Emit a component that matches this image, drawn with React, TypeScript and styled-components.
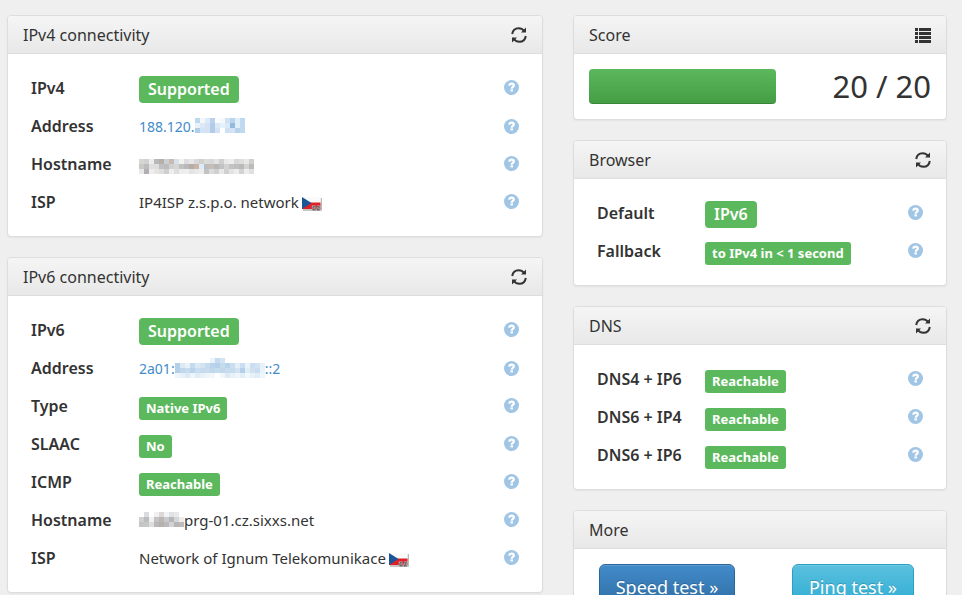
import React from "react";
import styled, { createGlobalStyle } from "styled-components";

const GlobalStyle = createGlobalStyle`
  * { box-sizing: border-box; }
  body {
    margin: 0;
    background: #efefef;
    color: #333;
    font-family: "Noto Sans", "Open Sans", sans-serif;
    font-size: 15px;
    line-height: 20px;
  }
`;

const Page = styled.main`
  display: grid;
  grid-template-columns: 536fr 374fr;
  gap: 30px;
  align-items: start;
  padding: 15px 15px 20px 7px;
`;

const Column = styled.div`
  display: flex;
  flex-direction: column;
  gap: 20px;
  min-width: 0;
`;

const PanelBox = styled.section`
  background: #fff;
  border: 1px solid #ddd;
  border-radius: 4px;
  box-shadow: 0 1px 2px rgba(0, 0, 0, 0.05);
`;

const PanelHeader = styled.header`
  display: flex;
  align-items: center;
  justify-content: space-between;
  min-height: 38px;
  padding: 0 15px;
  border-bottom: 1px solid #ddd;
  border-radius: 3px 3px 0 0;
  background: linear-gradient(#f5f5f5, #e8e8e8);
`;

const PanelTitle = styled.h2`
  margin: 0;
  font-size: 16px;
  font-weight: 400;
  line-height: 22px;
`;

const IconButton = styled.button`
  display: flex;
  padding: 0;
  border: 0;
  background: none;
  color: #333;
  cursor: pointer;
`;

const Facts = styled.dl`
  margin: 0;
  padding: 15px 23px;
`;

const Fact = styled.div`
  display: grid;
  grid-template-columns: 108px 1fr auto;
  height: 38px;
  line-height: 38px;
`;

const Label = styled.dt`
  font-size: 16px;
  font-weight: 600;
  white-space: nowrap;
`;

const Value = styled.dd`
  margin: 0;
  white-space: nowrap;
`;

const Help = styled.dd`
  display: flex;
  align-items: center;
  margin: 0;
  padding-bottom: 1px;
`;

const HelpButton = styled(IconButton)`
  color: #a0c5e5;
`;

const Badge = styled.span<{ $large?: boolean }>`
  display: inline-block;
  padding: ${(p) => (p.$large ? "3px 9px 4px" : "2px 7px 3px")};
  border-radius: ${(p) => (p.$large ? "4px" : "3px")};
  background: #5cb85c;
  color: #fff;
  font-size: ${(p) => (p.$large ? "16px" : "13px")};
  font-weight: ${(p) => (p.$large ? 600 : 700)};
  line-height: ${(p) => (p.$large ? "20px" : "18px")};
  vertical-align: -1px;
`;

const AddressLink = styled.a`
  color: #428bca;
  font-size: 14px;
  text-decoration: none;
`;

const MosaicSvg = styled.svg<{ $drop: number }>`
  vertical-align: ${(p) => -p.$drop}px;
`;

const FlagSvg = styled.svg`
  margin-left: 3px;
  vertical-align: -4px;
`;

const ScoreBody = styled.div`
  display: flex;
  align-items: center;
  justify-content: space-between;
  padding: 15px;
`;

const ScoreTrack = styled.div`
  width: 187px;
  flex: 0 1 auto;
`;

const ScoreFill = styled.div`
  height: 35px;
  border-radius: 4px;
  background: linear-gradient(#5cb85c, #449d44);
  box-shadow: inset 0 -1px 0 rgba(0, 0, 0, 0.15);
`;

const ScoreText = styled.strong`
  font-size: 31px;
  font-weight: 400;
  line-height: 35px;
`;

const Actions = styled.div`
  display: grid;
  grid-template-columns: 1fr 1fr;
  justify-items: center;
  padding: 15px 0;
`;

const ActionLink = styled.a<{ $tone: "primary" | "info" }>`
  padding: 10px 16px;
  border: 1px solid ${(p) => (p.$tone === "primary" ? "#2b669a" : "#28a1c5")};
  border-radius: 6px;
  background: ${(p) =>
    p.$tone === "primary"
      ? "linear-gradient(#428bca, #2d6ca2)"
      : "linear-gradient(#5bc0de, #2aabd2)"};
  box-shadow: inset 0 1px 0 rgba(255, 255, 255, 0.15), 0 1px 1px rgba(0, 0, 0, 0.075);
  color: #fff;
  font-size: 18px;
  line-height: 24px;
  text-decoration: none;
  text-shadow: 0 -1px 0 rgba(0, 0, 0, 0.2);
`;

function RefreshIcon() {
  return (
    <svg width="16" height="16" viewBox="0 0 16 16" aria-hidden="true">
      <g fill="none" stroke="currentColor" strokeWidth="2">
        <path d="M1.2 7 C1.8 3.2 4.5 1.2 7.6 1.2 C10 1.2 11.8 2.2 13 3.8" />
        <path d="M14.8 9 C14.2 12.8 11.5 14.8 8.4 14.8 C6 14.8 4.2 13.8 3 12.2" />
      </g>
      <path fill="currentColor" d="M15 0.5V5.5H10Z M1 15.5V10.5H6Z" />
    </svg>
  );
}

function ListIcon() {
  return (
    <svg width="16" height="16" viewBox="0 0 16 16" aria-hidden="true" fill="currentColor">
      {[1, 5, 9, 13].map((y) => (
        <path key={y} d={`M0 ${y}h3v3h-3z M4 ${y}h12v3h-12z`} />
      ))}
    </svg>
  );
}

function HelpIcon() {
  return (
    <svg width="15" height="15" viewBox="0 0 15 15" aria-hidden="true">
      <circle cx="7.5" cy="7.5" r="7.5" fill="currentColor" />
      <path
        d="M5.3 5.7C5.4 4.2 6.4 3.6 7.7 3.6C9 3.6 9.8 4.3 9.8 5.4C9.8 6.9 7.7 6.9 7.7 8.7"
        fill="none"
        stroke="#fff"
        strokeWidth="2.2"
      />
      <rect x="6.4" y="9.4" width="2.6" height="2" fill="#fff" />
    </svg>
  );
}

function Flag() {
  return (
    <FlagSvg width="20" height="16" viewBox="0 0 20 16" role="img" aria-label="Czech Republic">
      <path d="M1 14H19.2V2" fill="none" stroke="#b4b4b4" strokeWidth="1.4" />
      <path d="M0 1H18.5V7H0Z" fill="#fafafa" />
      <path d="M0 13V9L9 6.5H18.5V13Z" fill="#e02028" />
      <path d="M0 1L9.5 7L0 13Z" fill="#1c5596" />
      <path
        d="M13.6 10.8H11V13.8H13.6M14.8 10.8H17.6L15 13.8H17.8"
        fill="none"
        stroke="#bdb4b4"
        strokeWidth="2.4"
      />
      <path
        d="M13.6 10.8H11V13.8H13.6M14.8 10.8H17.6L15 13.8H17.8"
        fill="none"
        stroke="#555"
        strokeWidth="1"
      />
    </FlagSvg>
  );
}

const maskedIpv4 = [
  "bcd9ee f4f8fc dde9f6 b9d2ec fbfdff f4f9fd cfe1f3 b9d5ee e1effa bfdaf0",
  "e8f2fa dce8f5 d4e3f3 b3cbe8 dceaf7 e4f2fb dbe8f5 94b9df e1effa bfdaf0",
  "b0cdea d4e4f4 d4e3f3 b3cbe8 d4e3f3 fff cfe0f2 d4e4f4 b5d3ec bfdaf0",
];

const maskedHost4 = [
  "d6d7d2 d2d1d1 eeecec b7b8bb b7b0a9 ccd0d3 c7bbb3 d7e2ef f4f2ef dedede e8e7e7 d9d9db d0d0d1 dcdcd9 d8d8d8 e3e3e3 cfcfd0 e9e9e9 efeded d8d8d8 dededf eae8e7 cfcfcf",
  "c8cbc3 bcbcbc e0dfdf dedede bfc0c2 bcbcbc d0d0d1 d8d5d5 bfc1c3 b9b9bd b5ada6 c9b5a8 dcebf7 bcbcbf c5bdb7 bab6b4 c2c2c4 d2d2d2 c3c3c6 bfbfbf b8bab6 d3d3d3 bcbcbc",
  "e8e8e8 b0b0b3 eeeeef e8e4e1 dededf cfcfd0 eeeeef dedee0 ededee efefef e3e3e3 e8e8e9 ededed c3c3c4 dcdcdd d0d0d1 e8e8e9 d0d0d1 e3e3e3 ededee d3d3d4 ededed e0e0e0",
];

const maskedIpv6 = [
  "fff fff fff fff fff fff fff e9f3fa c5dcef d2e4f2 fff fff fff fff fff fff fff fff",
  "b4d0e9 dbe9f4 e6f1f8 c5dcef dbe9f4 d2e4f2 c5dcef b9d3ea b4d0e9 c5dcef b9d3ea c9dff1 e3eff8 c9dff1 e9f3fa c9dff1 d2e4f2 e6f1f8",
  "b4d0e9 c0d7ec c9dcef b9d3ea c9dff1 c5dcef c9dcef c0d7ec c5dcef c0d7ec c9dcef c5dcef d2e4f2 b4d0e9 dfedf7 d2e0f0 cadcef e9f3fa",
  "eef6fb e6f1f8 dceaf5 eef6fb dfedf7 e6f1f8 eef6fb f2f7fc fff f2f7fc dceaf5 e6f1f8 eef6fb e3eff8 f2f7fc e6f1f8 dfedf7 eef6fb",
];

const maskedHost6 = [
  "fff d9dcdc fff f0f0f0 dcd8d5 f0f4f8 e2e2e4 e9e9ec fff",
  "cfcfd1 bcbcc0 f0f0f0 c3c3c5 b9b6b3 c9c9cc b6b6ba d6d6d8 ededed",
  "c5c5c7 c3c7c5 dededf b9b9b9 b5b2ae bababe d2d2d3 b6b6b9 bcbcbe",
];

function Mosaic({ rows, drop, cell = 5 }: { rows: string[]; drop: number; cell?: number }) {
  const grid = rows.map((r) => r.split(" "));
  const width = grid[0].length * cell;
  const height = grid.length * cell;
  return (
    <MosaicSvg
      $drop={drop}
      width={width}
      height={height}
      viewBox={`0 0 ${width} ${height}`}
      shapeRendering="crispEdges"
      aria-hidden="true"
    >
      {grid.map((row, y) =>
        row.map((color, x) => (
          <rect
            key={`${x}-${y}`}
            x={x * cell}
            y={y * cell}
            width={cell}
            height={cell}
            fill={`#${color}`}
          />
        ))
      )}
    </MosaicSvg>
  );
}

function Panel({
  title,
  action,
  actionLabel,
  children,
}: {
  title: string;
  action?: React.ReactNode;
  actionLabel?: string;
  children: React.ReactNode;
}) {
  return (
    <PanelBox>
      <PanelHeader>
        <PanelTitle>{title}</PanelTitle>
        {action && (
          <IconButton type="button" aria-label={actionLabel}>
            {action}
          </IconButton>
        )}
      </PanelHeader>
      {children}
    </PanelBox>
  );
}

function Row({ label, children }: { label: string; children: React.ReactNode }) {
  return (
    <Fact>
      <Label>{label}</Label>
      <Value>{children}</Value>
      <Help>
        <HelpButton type="button" aria-label={`Help: ${label}`}>
          <HelpIcon />
        </HelpButton>
      </Help>
    </Fact>
  );
}

export default function App() {
  return (
    <>
      <GlobalStyle />
      <Page>
        <Column>
          <Panel title="IPv4 connectivity" action={<RefreshIcon />} actionLabel="Refresh">
            <Facts>
              <Row label="IPv4">
                <Badge $large>Supported</Badge>
              </Row>
              <Row label="Address">
                <AddressLink href="#ipv4">
                  188.120.
                  <Mosaic rows={maskedIpv4} drop={1} />
                </AddressLink>
              </Row>
              <Row label="Hostname">
                <Mosaic rows={maskedHost4} drop={4} />
              </Row>
              <Row label="ISP">
                IP4ISP z.s.p.o. network
                <Flag />
              </Row>
            </Facts>
          </Panel>
          <Panel title="IPv6 connectivity" action={<RefreshIcon />} actionLabel="Refresh">
            <Facts>
              <Row label="IPv6">
                <Badge $large>Supported</Badge>
              </Row>
              <Row label="Address">
                <AddressLink href="#ipv6">
                  2a01:
                  <Mosaic rows={maskedIpv6} drop={4} />
                  ::2
                </AddressLink>
              </Row>
              <Row label="Type">
                <Badge>Native IPv6</Badge>
              </Row>
              <Row label="SLAAC">
                <Badge>No</Badge>
              </Row>
              <Row label="ICMP">
                <Badge>Reachable</Badge>
              </Row>
              <Row label="Hostname">
                <Mosaic rows={maskedHost6} drop={1} />
                prg-01.cz.sixxs.net
              </Row>
              <Row label="ISP">
                Network of Ignum Telekomunikace
                <Flag />
              </Row>
            </Facts>
          </Panel>
        </Column>
        <Column>
          <Panel title="Score" action={<ListIcon />} actionLabel="Score details">
            <ScoreBody>
              <ScoreTrack role="img" aria-label="Score bar">
                <ScoreFill />
              </ScoreTrack>
              <ScoreText>20 / 20</ScoreText>
            </ScoreBody>
          </Panel>
          <Panel title="Browser" action={<RefreshIcon />} actionLabel="Refresh">
            <Facts>
              <Row label="Default">
                <Badge $large>IPv6</Badge>
              </Row>
              <Row label="Fallback">
                <Badge>to IPv4 in &lt; 1 second</Badge>
              </Row>
            </Facts>
          </Panel>
          <Panel title="DNS" action={<RefreshIcon />} actionLabel="Refresh">
            <Facts>
              <Row label="DNS4 + IP6">
                <Badge>Reachable</Badge>
              </Row>
              <Row label="DNS6 + IP4">
                <Badge>Reachable</Badge>
              </Row>
              <Row label="DNS6 + IP6">
                <Badge>Reachable</Badge>
              </Row>
            </Facts>
          </Panel>
          <Panel title="More">
            <Actions>
              <ActionLink href="#speed-test" $tone="primary">
                Speed test »
              </ActionLink>
              <ActionLink href="#ping-test" $tone="info">
                Ping test »
              </ActionLink>
            </Actions>
          </Panel>
        </Column>
      </Page>
    </>
  );
}
